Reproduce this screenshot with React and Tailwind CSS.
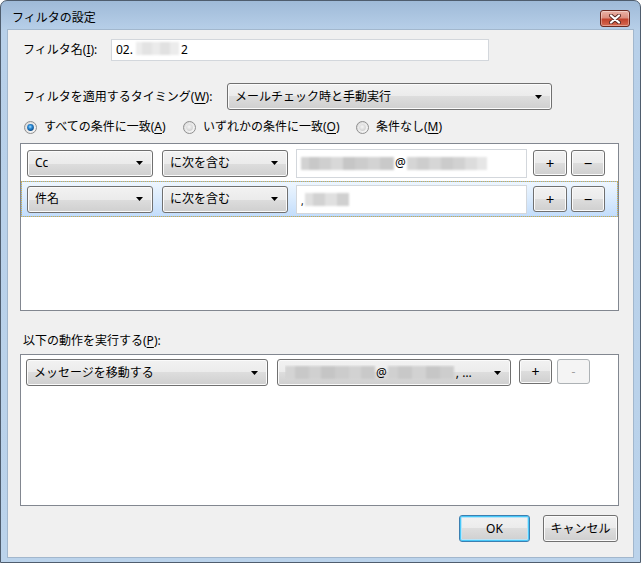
import React from "react";

const FONT = "font-['Noto_Sans','Noto_Sans_CJK_JP',sans-serif]";

function Arrow() {
  return (
    <svg width="7" height="4" viewBox="0 0 7 4" className="shrink-0">
      <path d="M0 0h7L3.5 4z" fill="#000" />
    </svg>
  );
}

function Mosaic({ cells }) {
  return (
    <span className="inline-flex h-[13px] blur-[0.8px]">
      {cells.map(([w, c], i) => (
        <span key={i} className="h-full" style={{ width: w, background: c }} />
      ))}
    </span>
  );
}

function Dropdown({ w, children }) {
  return (
    <div
      className={`${w} h-[27px] shrink-0 flex items-center justify-between pl-[7px] pr-[9px] rounded-[3px] border border-[#707070] bg-[linear-gradient(to_bottom,#f2f2f2_0%,#ebebeb_50%,#dddddd_50%,#cfcfcf_100%)] shadow-[inset_0_0_0_1px_#fbfbfb] text-[12px] leading-[16px] text-black`}
    >
      <div className="flex items-center min-w-0 overflow-hidden whitespace-nowrap">{children}</div>
      <Arrow />
    </div>
  );
}

function SmallBtn({ children, disabled }) {
  if (disabled) {
    return (
      <div className="w-[33px] h-[25px] ml-[5px] shrink-0 flex items-center justify-center rounded-[3px] border border-[#adb2b5] bg-[#f4f4f4] text-[12px] text-[#a0a0a0]">
        {children}
      </div>
    );
  }
  return (
    <div className="w-[33px] h-[25px] shrink-0 flex items-center justify-center rounded-[3px] border border-[#707070] bg-[linear-gradient(to_bottom,#f2f2f2_0%,#ebebeb_50%,#dddddd_50%,#cfcfcf_100%)] shadow-[inset_0_0_0_1px_#fbfbfb] text-[14px] leading-none text-black">
      {children}
    </div>
  );
}

function RowBtn({ children }) {
  return (
    <div className="w-[34px] h-[26px] shrink-0 flex items-center justify-center rounded-[3px] border border-[#707070] bg-[linear-gradient(to_bottom,#f2f2f2_0%,#ebebeb_50%,#dddddd_50%,#cfcfcf_100%)] shadow-[inset_0_0_0_1px_#fbfbfb] text-[15px] leading-none text-black">
      {children}
    </div>
  );
}

function Radio({ checked }) {
  return (
    <svg width="13" height="13" viewBox="0 0 13 13" className="shrink-0">
      <defs>
        <linearGradient id="rbg" x1="0" y1="0" x2="1" y2="1">
          <stop offset="0" stopColor="#d4d4d4" />
          <stop offset="1" stopColor="#fafafa" />
        </linearGradient>
        <radialGradient id="rdot" cx="45%" cy="40%" r="60%">
          <stop offset="0" stopColor="#a8e0ff" />
          <stop offset="0.45" stopColor="#2c8bd6" />
          <stop offset="1" stopColor="#0c4a86" />
        </radialGradient>
        <radialGradient id="rgray" cx="45%" cy="40%" r="60%">
          <stop offset="0" stopColor="#f6f6f6" />
          <stop offset="1" stopColor="#d0d0d0" />
        </radialGradient>
      </defs>
      <circle cx="6.5" cy="6.5" r="6" fill="url(#rbg)" stroke="#8f8f8f" strokeWidth="1" />
      <circle cx="6.5" cy="6.5" r="4" fill="#f4f4f4" />
      <circle cx="6.5" cy="6.5" r="3.4" fill={checked ? "url(#rdot)" : "url(#rgray)"} />
    </svg>
  );
}

function TextBox({ w, h, children }) {
  return (
    <div className={`${w} ${h} shrink-0 flex items-center pl-[4px] bg-white border border-[#d3d7dc] text-[12px] leading-[16px] text-black whitespace-nowrap overflow-hidden`}>
      {children}
    </div>
  );
}

function U({ children }) {
  return <span className="underline underline-offset-2">{children}</span>;
}

export default function App() {
  return (
    <div className="w-[641px] h-[563px] bg-white">
      <div
        className={`w-[641px] h-[563px] flex flex-col border border-[#4f5d6e] rounded-t-[7px] overflow-hidden bg-[linear-gradient(to_bottom,#9fbad8_0px,#b8d0e9_30px,#bbd3eb_100%)] ${FONT}`}
      >
        {/* Title bar */}
        <div className="h-[29px] shrink-0 flex items-start justify-between pl-[11px] pr-[10px]">
          <span className="mt-[9px] text-[12px] leading-[16px] text-black">フィルタの設定</span>
          <div className="mt-[9px] w-[30px] h-[17px] flex items-center justify-center rounded-[3px] border border-[#6b2a20] bg-[linear-gradient(to_bottom,#eab2a6_0%,#dc8e7e_45%,#c2432d_55%,#d66a52_100%)] shadow-[inset_0_0_0_1px_rgba(255,255,255,0.35)]">
            <svg width="12" height="10" viewBox="0 0 12 10">
              <path d="M2 1.5L10 8.5M10 1.5L2 8.5" stroke="#5a2a24" strokeWidth="4" strokeLinecap="round" />
              <path d="M2 1.5L10 8.5M10 1.5L2 8.5" stroke="#ffffff" strokeWidth="2.2" strokeLinecap="round" />
            </svg>
          </div>
        </div>

        {/* Client area */}
        <div className="flex-1 mx-[7px] mb-[5px] bg-[#f0f0f0] shadow-[0_0_0_1px_#a2b7cd] flex flex-col pl-[12px] pr-[14px] pt-[9px] pb-[15px] text-[12px] leading-[16px] text-black">
          {/* Filter name */}
          <div className="h-[22px] flex items-center pl-[3px]">
            <span className="w-[88px] shrink-0">
              フィルタ名(<U>I</U>):
            </span>
            <TextBox w="w-[378px]" h="h-[22px]">
              <span>02.</span>
              <span className="ml-[3px]">
                <Mosaic cells={[[6, "#ededed"], [10, "#e3e3e3"], [8, "#ebebeb"], [10, "#e1e1e1"], [9, "#ececec"]]} />
              </span>
              <span className="ml-[2px]">2</span>
            </TextBox>
          </div>

          {/* Timing */}
          <div className="mt-[22px] h-[27px] flex items-center pl-[3px]">
            <span className="w-[204px] shrink-0">
              フィルタを適用するタイミング(<U>W</U>):
            </span>
            <Dropdown w="w-[325px]">メールチェック時と手動実行</Dropdown>
          </div>

          {/* Radios */}
          <div className="mt-[9px] h-[16px] flex items-center pl-[4px]">
            <div className="w-[159px] shrink-0 flex items-center gap-[7px]">
              <Radio checked />
              <span>
                すべての条件に一致(<U>A</U>)
              </span>
            </div>
            <div className="w-[173px] shrink-0 flex items-center gap-[7px]">
              <Radio />
              <span>
                いずれかの条件に一致(<U>O</U>)
              </span>
            </div>
            <div className="flex items-center gap-[7px]">
              <Radio />
              <span>
                条件なし(<U>M</U>)
              </span>
            </div>
          </div>

          {/* Conditions list */}
          <div className="mt-[8px] h-[168px] shrink-0 border border-[#828790] bg-white pt-[1px] flex flex-col">
            <div className="h-[36px] flex items-center pl-[6px]">
              <Dropdown w="w-[126px]">Cc</Dropdown>
              <div className="ml-[9px]">
                <Dropdown w="w-[126px]">に次を含む</Dropdown>
              </div>
              <div className="ml-[8px]">
                <TextBox w="w-[231px]" h="h-[29px]">
                  <Mosaic cells={[[8, "#d2d2d2"], [10, "#c8c8c8"], [12, "#cfcfcf"], [12, "#d8d8d8"], [12, "#c6c6c6"], [13, "#cccccc"], [12, "#d3d3d3"], [14, "#c9c9c9"]]} />
                  <span className="mx-[1px]">@</span>
                  <Mosaic cells={[[10, "#d5d5d5"], [12, "#cdcdcd"], [12, "#d6d6d6"], [12, "#cbcbcb"], [12, "#d1d1d1"], [12, "#dcdcdc"], [10, "#e6e6e6"]]} />
                </TextBox>
              </div>
              <div className="ml-[6px] flex gap-[4px]">
                <RowBtn>+</RowBtn>
                <RowBtn>−</RowBtn>
              </div>
            </div>
            <div className="h-[36px] flex items-center pl-[5px] border border-[#8dbcee] outline-1 outline-dotted outline-[#d8b04a] -outline-offset-1 bg-[linear-gradient(to_bottom,#eef6fe_0%,#dcecfd_45%,#c3ddfb_100%)]">
              <Dropdown w="w-[126px]">件名</Dropdown>
              <div className="ml-[9px]">
                <Dropdown w="w-[126px]">に次を含む</Dropdown>
              </div>
              <div className="ml-[8px]">
                <TextBox w="w-[231px]" h="h-[29px]">
                  <span className="text-[10px] leading-none mt-[4px] mr-[1px]">,</span>
                  <Mosaic cells={[[8, "#e0e0e0"], [12, "#d2d2d2"], [12, "#e0e0e0"], [12, "#d0d0d0"]]} />
                </TextBox>
              </div>
              <div className="ml-[6px] flex gap-[4px]">
                <RowBtn>+</RowBtn>
                <RowBtn>−</RowBtn>
              </div>
            </div>
          </div>

          {/* Actions label */}
          <div className="mt-[22px] h-[16px] flex items-center pl-[3px]">
            以下の動作を実行する(<U>P</U>):
          </div>

          {/* Actions list */}
          <div className="mt-[5px] flex-1 border border-[#828790] bg-white pt-[4px] pl-[5px] flex flex-col">
            <div className="flex items-start">
              <Dropdown w="w-[242px]">メッセージを移動する</Dropdown>
              <div className="ml-[9px]">
                <Dropdown w="w-[234px]">
                  <Mosaic cells={[[10, "#d4d4d4"], [14, "#c8c8c8"], [12, "#d0d0d0"], [14, "#c5c5c5"], [14, "#cccccc"], [12, "#d2d2d2"], [14, "#c9c9c9"]]} />
                  <span className="mx-[1px]">@</span>
                  <Mosaic cells={[[10, "#d0d0d0"], [14, "#c8c8c8"], [14, "#d2d2d2"], [14, "#c6c6c6"], [14, "#cdcdcd"]]} />
                  <span className="ml-[2px]">, …</span>
                </Dropdown>
              </div>
              <div className="ml-[8px] flex">
                <SmallBtn>+</SmallBtn>
                <SmallBtn disabled>-</SmallBtn>
              </div>
            </div>
          </div>

          {/* Dialog buttons */}
          <div className="mt-[9px] h-[27px] shrink-0 flex justify-end gap-[13px] mr-[1px]">
            <div className="w-[71px] h-[27px] flex items-center justify-center rounded-[3px] border border-[#3c7fb1] bg-[linear-gradient(to_bottom,#f2f2f2_0%,#ebebeb_50%,#dddddd_50%,#cfcfcf_100%)] shadow-[inset_0_0_0_1px_#48c8f8,inset_0_0_0_2px_#b8e4f8] text-[12px]">
              OK
            </div>
            <div className="w-[75px] h-[27px] flex items-center justify-center rounded-[3px] border border-[#707070] bg-[linear-gradient(to_bottom,#f2f2f2_0%,#ebebeb_50%,#dddddd_50%,#cfcfcf_100%)] shadow-[inset_0_0_0_1px_#fbfbfb] text-[12px]">
              キャンセル
            </div>
          </div>
        </div>
      </div>
    </div>
  );
}
